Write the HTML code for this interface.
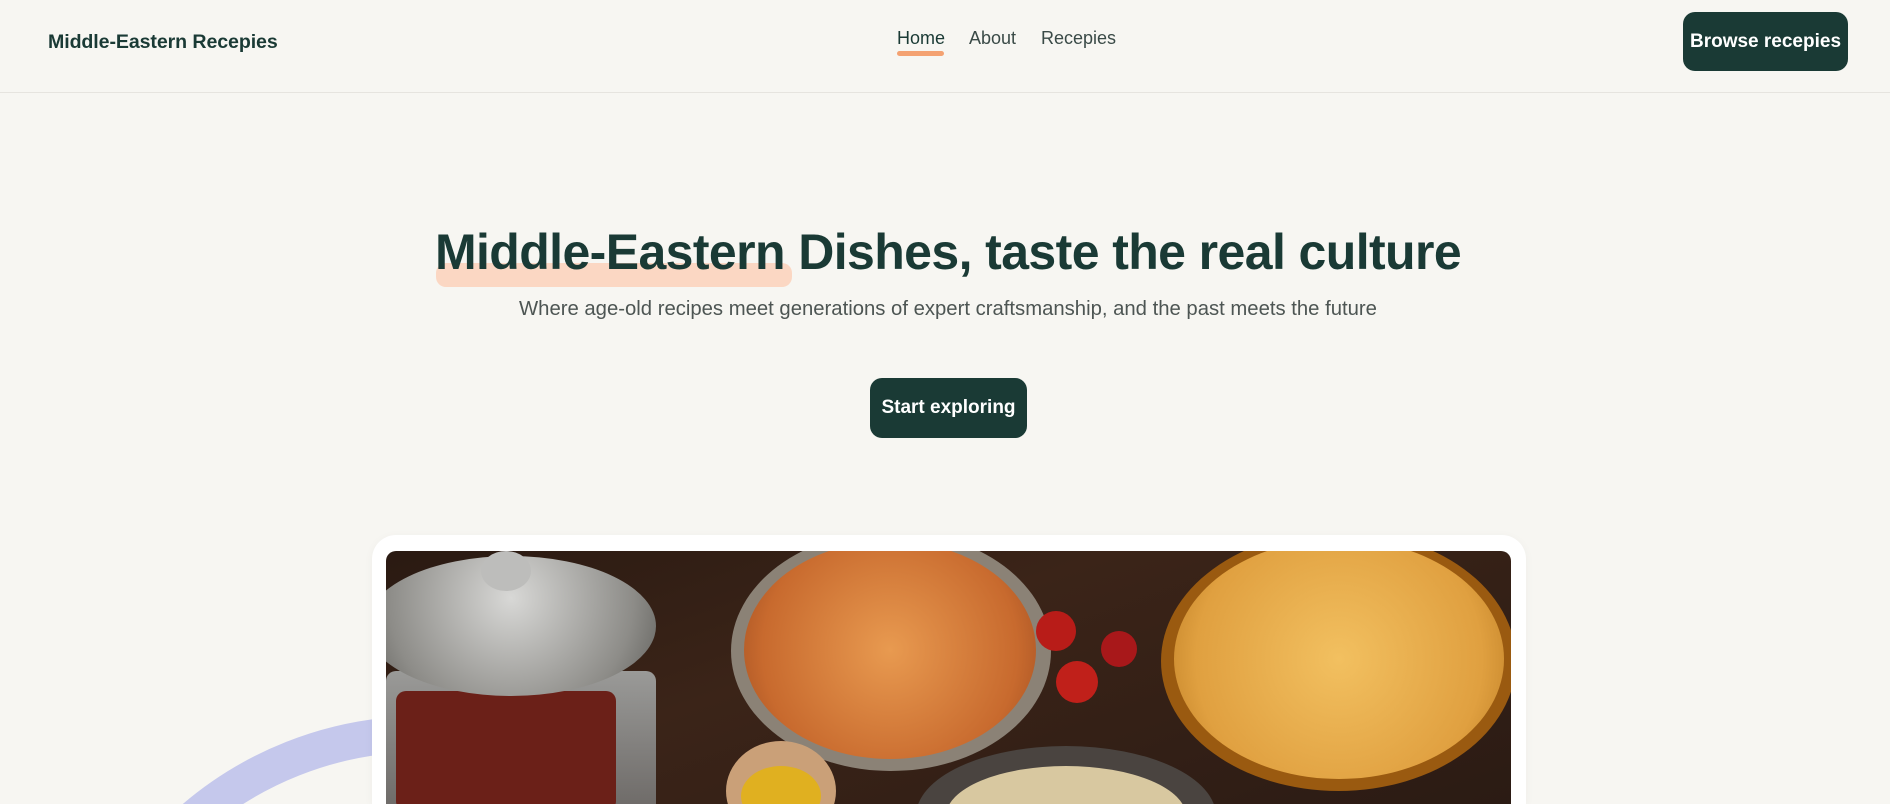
<!DOCTYPE html>
<html><head><meta charset="utf-8"><style>
*{margin:0;padding:0;box-sizing:border-box}
html,body{width:1890px;height:804px;overflow:hidden;background:#f7f6f2}
body{font-family:"Liberation Sans",sans-serif;color:#1a3a35}
#w{position:relative;width:1890px;height:804px;overflow:hidden}
.hdr{position:absolute;left:0;top:0;width:1890px;height:93px;border-bottom:1px solid #e6e4df}
.logo{position:absolute;left:48px;top:31px;font-size:19.6px;font-weight:bold;letter-spacing:-0.1px}
.nav a{position:absolute;top:28px;font-size:18px;color:#3a4a47;text-decoration:none}
.ul{position:absolute;left:897px;top:51px;width:47px;height:5px;border-radius:3px;background:#f4a272}
.btn{position:absolute;background:#1a3a35;color:#fff;font-weight:bold;font-size:19px;border-radius:12px;display:flex;align-items:center;justify-content:center}
h1{position:absolute;left:0;width:1896px;top:223px;text-align:center;font-size:50px;font-weight:bold;letter-spacing:-0.6px;z-index:2}
.hl{position:absolute;left:436px;top:263px;width:356px;height:24px;background:#fbd7c3;border-radius:10px;z-index:1}
.sub{position:absolute;left:0;width:1896px;top:298px;text-align:center;font-size:20.3px;color:#4d5553}
.clip{position:absolute;left:0;top:700px;width:800px;height:104px;overflow:hidden}
.arc{position:absolute;left:53px;top:16px;width:738px;height:738px;border-radius:50%;border:36px solid #c5c8ec}
.card{position:absolute;left:372px;top:535px;width:1154px;height:269px;background:#fff;border-radius:24px 24px 0 0;box-shadow:0 2px 10px rgba(0,0,0,.04)}
.img{position:absolute;left:386px;top:551px;width:1125px;height:253px;border-radius:10px 10px 0 0;overflow:hidden;background:linear-gradient(160deg,#2a1a12,#3b2418 40%,#2b1b14)}
.img div{position:absolute;border-radius:50%}
</style></head><body><div id="w">
<div class="hdr">
<div class="logo">Middle-Eastern Recepies</div>
<div class="nav"><a style="left:897px;color:#1a3a35">Home</a><a style="left:969px">About</a><a style="left:1041px">Recepies</a></div>
<div class="ul"></div>
<div class="btn" style="left:1683px;top:12px;width:165px;height:59px">Browse recepies</div>
</div>
<div class="hl"></div>
<h1>Middle-Eastern Dishes, taste the real culture</h1>
<div class="sub">Where age-old recipes meet generations of expert craftsmanship, and the past meets the future</div>
<div class="btn" style="left:870px;top:378px;width:157px;height:60px">Start exploring</div>
<div class="clip"><div class="arc"></div></div>
<div class="card"></div>
<div class="img">
<div style="left:0;top:120px;width:270px;height:200px;border-radius:10px;background:linear-gradient(#9a9a98,#5a5552);"></div>
<div style="left:10px;top:140px;width:220px;height:120px;border-radius:10px;background:#6b2018"></div>
<div style="left:-20px;top:5px;width:290px;height:140px;background:radial-gradient(circle at 50% 30%,#d8d8d6,#8d8c88 70%,#5d5c58)"></div>
<div style="left:95px;top:0;width:50px;height:40px;background:#bdbdbb"></div>
<div style="left:345px;top:-20px;width:320px;height:240px;background:#8b8276"></div>
<div style="left:358px;top:-10px;width:292px;height:218px;background:radial-gradient(circle,#e89a50,#c86a2e 70%,#9a4a20)"></div>
<div style="left:650px;top:60px;width:40px;height:40px;background:#b81c18"></div>
<div style="left:670px;top:110px;width:42px;height:42px;background:#c0201a"></div>
<div style="left:715px;top:80px;width:36px;height:36px;background:#a8181a"></div>
<div style="left:775px;top:-20px;width:355px;height:260px;background:#9a5a10"></div>
<div style="left:788px;top:-12px;width:330px;height:240px;background:radial-gradient(circle,#f2c060,#e0a040 70%,#b87820)"></div>
<div style="left:530px;top:195px;width:300px;height:140px;background:#4a4440"></div>
<div style="left:560px;top:215px;width:240px;height:100px;background:#d8c8a0"></div>
<div style="left:340px;top:190px;width:110px;height:100px;background:#caa078"></div>
<div style="left:355px;top:215px;width:80px;height:60px;background:#e0b020"></div>
</div>
</div></body></html>
